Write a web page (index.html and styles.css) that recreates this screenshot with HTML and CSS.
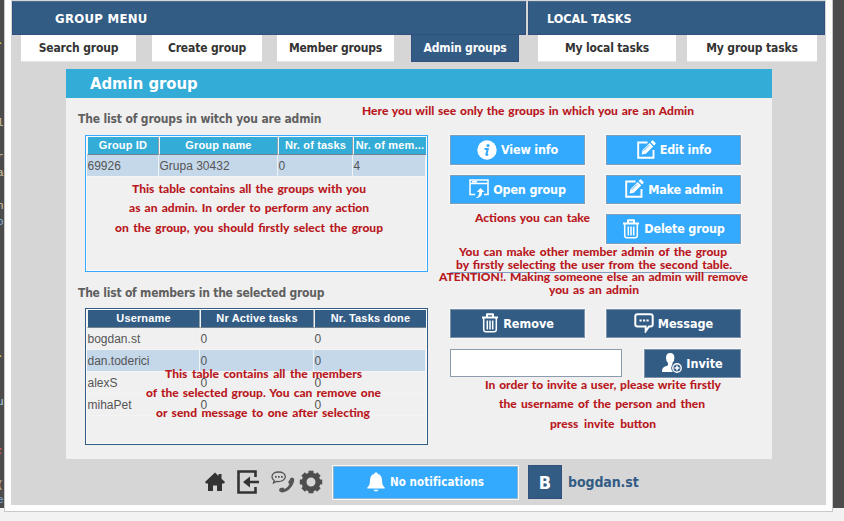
FILE: index.html
```html
<!DOCTYPE html>
<html lang="en">
<head>
<meta charset="utf-8">
<title>Admin group</title>
<link rel="stylesheet" href="styles.css">
</head>
<body>
<svg class="defs" aria-hidden="true">
  <symbol id="edit" viewBox="0 0 20 20"><path d="M11.500 2.500H2.200v15.300h15.300V10" fill="none" stroke="currentColor" stroke-width="1.900"/><path d="M5.500 14.500l1-4.300 7.200-7.200 3.500 3.500-7.300 7.200zM14.600 2l1.500-1.500q.7-.4 1.300.2l2 2q.6.700.1 1.300L18 5.500z" fill="currentColor"/><path d="M7.700 10.700l5.500-5.500" stroke="var(--bg)" stroke-width=".8"/></symbol>
  <symbol id="trash" viewBox="0 0 18 20"><path d="M1 4.500h16M6 4V1.300h6V4" fill="none" stroke="currentColor" stroke-width="2" stroke-linejoin="round"/><path d="M2.700 5v11.500q0 2.300 2.300 2.300h8q2.300 0 2.300-2.300V5M6.300 7.500v9M9 7.500v9M11.700 7.500v9" fill="none" stroke="currentColor" stroke-width="1.500"/></symbol>
</svg>
<div class="code" aria-hidden="true"><i class="c1">.</i><i class="c2">l</i><i class="c3">r</i><i class="c4">a</i><i class="c5">n</i><i class="c6">o</i><i class="c7">.</i><i class="c8">u</i><i class="c9">:</i><i class="c10">(</i><i class="c11">e</i></div>
<div class="window">
  <header class="menu"><div class="menu-group">GROUP MENU</div><div class="menu-local">LOCAL TASKS</div></header>
  <nav class="tabs">
    <a class="t1">Search group</a><a class="t2">Create group</a><a class="t3">Member groups</a><a class="t4 active">Admin groups</a><a class="t5">My local tasks</a><a class="t6">My group tasks</a>
  </nav>
  <main class="panel">
    <h1>Admin group</h1>
    <div class="content">
      <section class="lists">
        <h2>The list of groups in witch you are admin</h2>
        <div class="table groups">
          <div class="row head"><b>Group ID</b><b>Group name</b><b>Nr. of tasks</b><b>Nr. of mem...</b></div>
          <div class="row selected"><span>69926</span><span>Grupa 30432</span><span>0</span><span>4</span></div>
        </div>
        <h2 class="second">The list of members in the selected group</h2>
        <div class="table members">
          <div class="row head"><b>Username</b><b>Nr Active tasks</b><b>Nr. Tasks done</b></div>
          <div class="row"><span>bogdan.st</span><span>0</span><span>0</span></div>
          <div class="row selected"><span>dan.toderici</span><span>0</span><span>0</span></div>
          <div class="row"><span>alexS</span><span>0</span><span>0</span></div>
          <div class="row"><span>mihaPet</span><span>0</span><span>0</span></div>
        </div>
      </section>
      <section class="actions">
        <div class="button-grid">
          <button><svg width="20" height="20" viewBox="0 0 20 20"><circle cx="10" cy="10" r="9.700" fill="currentColor"/><circle cx="11" cy="5.500" r="1.600" fill="var(--bg)"/><path d="M7.500 9h3.300L9.300 14.500q-.2 1 1.900-.2" fill="none" stroke="var(--bg)" stroke-width="2"/></svg>View info</button>
          <button><svg width="20" height="20"><use href="#edit"/></svg>Edit info</button>
          <button><svg width="20" height="20" viewBox="0 0 20 20"><path d="M6 15.500H1V1h18v14.500h-4M1 4.500h18M3 2.700h5" fill="none" stroke="currentColor" stroke-width="1.500"/><path d="M6 19q4.500-1 4.200-6H7.800L11.500 9l4 4h-2.400q.3 6-7.100 6z" fill="currentColor"/></svg>Open group</button>
          <button><svg width="20" height="20"><use href="#edit"/></svg>Make admin</button>
          <button class="right"><svg width="18" height="20"><use href="#trash"/></svg>Delete group</button>
        </div>
        <hr>
        <div class="button-grid dark">
          <button><svg width="18" height="20"><use href="#trash"/></svg>Remove</button>
          <button><svg width="20" height="20" viewBox="0 0 20 20"><path d="M3.500 1.300h13q2.200 0 2.200 2.200v7.700q0 2.200-2.200 2.200H15l-3.300 4.800v-4.800H3.500q-2.200 0-2.200-2.200V3.500q0-2.200 2.200-2.200z" fill="none" stroke="currentColor" stroke-width="2"/><path d="M5.500 6.500h2.200v2H5.500zm3.500 0h2.200v2H9zm3.500 0h2.200v2h-2.200z" fill="currentColor"/></svg>Message</button>
        </div>
        <div class="invite dark">
          <input aria-label="Username">
          <button><svg width="20" height="20" viewBox="0 0 20 20"><path d="M4 5q0-5 4.200-5t4.200 5q0 3-2 5v2q1.500.3 2 .8v6.200H0q0-4.500 2.500-5.300Q6 12.700 6 12v-2Q4 8 4 5z" fill="currentColor"/><circle cx="15" cy="15" r="5.800" fill="var(--bg)"/><circle cx="15" cy="15" r="4.200" fill="none" stroke="currentColor" stroke-width="1.400"/><path d="M15 12.500v5M12.500 15h5" stroke="currentColor" stroke-width="1.500"/></svg>Invite</button>
        </div>
      </section>
    </div>
  </main>
  <footer>
    <svg class="home" width="20" height="20" viewBox="0 0 20 20"><path d="M10 .5L0 10l1 1.500h2V19h5v-5.500h4V19h5v-7.500h2l1-1.500-3.500-3.300V2h-3v2z" fill="#333"/></svg>
    <svg class="exit" width="22" height="24" viewBox="0 0 22 24"><path d="M18.500 7V1.500h-17v21h17V17" fill="none" stroke="#333" stroke-width="2.600"/><path d="M6 12l7-5.500v4.200h9v2.600h-9v4.200z" fill="#333"/></svg>
    <svg class="contact" width="24" height="22" viewBox="0 0 24 22"><path d="M7.500 1C3.500 1 1 3 1 5.800c0 1.500 1 2.900 2.200 3.700L2.500 12l3-1.600c5 .8 8.800-1.600 8.800-4.700C14.300 3 11.500 1 7.500 1z" fill="none" stroke="#555" stroke-width="1.300"/><path d="M4 5h1.700v1.700H4zm3 0h1.700v1.700H7zm3 0h1.700v1.700H10z" fill="#555"/><path d="M20 6.500l3 .7q1 2.800-1.200 6.600-3.300 6-9.300 7.500-3 .5-4.500-1.600l.7-2.400 3.300-.8 1.700 1.500q3.300-1.600 4.700-4.700l-1.300-2z" fill="#555"/></svg>
    <svg class="gear" width="24" height="24" viewBox="0 0 24 24"><circle cx="12" cy="12" r="7" fill="none" stroke="#4d4d4d" stroke-width="5"/><path d="M12 .8v4M12 19.200v4M.8 12h4M19.200 12h4M4.100 4.100l2.800 2.800M17.100 17.100l2.800 2.800M19.900 4.100l-2.800 2.800M6.900 17.100l-2.800 2.800" stroke="#4d4d4d" stroke-width="5"/></svg>
    <button class="notify"><svg width="18" height="20" viewBox="0 0 18 20"><path d="M9 .3q1.500 0 1.500 1.500Q15 3 15 8.500q0 5 2.700 7v1H.3v-1Q3 13.500 3 8.500 3 3 7.500 1.800 7.500.3 9 .3zM6.500 17.700h5Q11 19.500 9 19.500t-2.500-1.800z" fill="currentColor"/></svg>No notifications</button>
    <div class="avatar">B</div><div class="user">bogdan.st</div>
  </footer>
</div>
<div class="notes">
  <p class="n1">Here you will see only the groups in which you are an Admin</p>
  <p class="n2">This table contains all the groups with you</p>
  <p class="n3">as an admin. In order to perform any action</p>
  <p class="n4">on the group, you should firstly select the group</p>
  <p class="n5">Actions you can take</p>
  <p class="n6">You can make other member admin of the group</p>
  <p class="n7">by firstly selecting the user from the second table.</p>
  <p class="n8">ATENTION!. Making someone else an admin will remove</p>
  <p class="n9">you as an admin</p>
  <p class="n10">This table contains all the members</p>
  <p class="n11">of the selected group. You can remove one</p>
  <p class="n12">or send message to one after selecting</p>
  <p class="n13">In order to invite a user, please write firstly</p>
  <p class="n14">the username of the person and then</p>
  <p class="n15">press invite button</p>
</div>
</body>
</html>
```
FILE: styles.css
```css
* { box-sizing: border-box; }
body { margin: 0; width: 844px; height: 521px; overflow: hidden; position: relative; background: linear-gradient(#4c4c4c 508px, #f2f2f2 508px); font-family: "DejaVu Sans Condensed", "DejaVu Sans", sans-serif; font-stretch: condensed; }
.defs { position: absolute; width: 0; height: 0; }
.window { width: 829px; height: 512px; margin-left: 4px; background: #fdfdfd; border: 1px solid #c8c8c8; border-top: 0; display: flex; flex-direction: column; padding: 0 6px 6px; }
.menu { display: flex; gap: 2px; height: 35px; padding: 1px 1px 0 1px; background: #d6d6d6; color: #fff; font-weight: bold; font-size: 12.500px; flex: none; }
.menu div { background: #335c85; border: 1px solid #31507f; border-top-color: #4a6c90; height: 34px; line-height: 34px; }
.menu-group { width: 514px; padding-left: 42px; font-size: 13px; letter-spacing: .3px; }
.menu-local { flex: 1; padding-left: 18px; }
.tabs { display: flex; height: 34px; background: #d6d6d6; padding-left: 10px; flex: none; }
.tabs a { height: 27px; background: #fff; color: #333; font-weight: bold; font-size: 12px; letter-spacing: -.15px; line-height: 26px; text-align: center; white-space: nowrap; border-bottom: 1px solid #e6e6e6; }
.tabs .active { background: #335c85; color: #fff; border: 1px solid #31507f; border-top: 0; }
.t1 { width: 115px; } .t2 { width: 110px; margin-left: 16px; } .t3 { width: 117px; margin-left: 15px; } .t4 { width: 108px; margin-left: 17px; } .t5 { width: 138px; margin-left: 19px; } .t6 { width: 130px; margin-left: 11px; }
.tabs .t3 { letter-spacing: -.2px; }
.panel { background: #f0f0f0; border: solid #d6d6d6; border-width: 0 54px 0 55px; height: 390px; flex: none; }
h1 { margin: 0; height: 29px; line-height: 30px; background: #33acd8; color: #fff; font-size: 16.500px; padding-left: 24px; }
.content { display: flex; }
.lists { width: 384px; padding-left: 12px; }
h2 { margin: 0; height: 37px; padding-top: 13px; font-size: 12px; letter-spacing: -.16px; line-height: 16px; color: #606060; white-space: nowrap; }
.table { margin-left: 7px; width: 343px; height: 137px; border: 1px solid #335c85; padding: 1px; box-shadow: inset 0 0 0 1px #fafafa; font: 12px "Liberation Sans", sans-serif; color: #555; }
.groups { --cols: 72px 119px 75px 1fr; --th: #33acd8; border-color: #34aaff; }
.members { --cols: 113px 114px 1fr; --th: #335c85; }
.row { display: grid; grid-template-columns: var(--cols); height: 22px; line-height: 22px; border-bottom: 1px solid #f4f4f4; }
.row span { border-right: 1px solid #f0f3f6; padding-left: .5px; }
.members .row:not(.selected) span { border-color: #f2f2f2; }
.selected { background: #c5d8ea; }
.head { height: 18px; line-height: 17px; border: 0; color: #fff; background: var(--th); text-align: center; font-size: 11px; }
.head b { border: solid #f4f4f4; border-width: 0 0 0 1px; border-bottom: 1px solid #71818f; letter-spacing: .15px; white-space: nowrap; }
.head b:not(:last-child) { border-right: 1px solid #91a2ac; }
.groups .head b:last-child { letter-spacing: .2px; }
.second { height: 36px; letter-spacing: -.22px; }
.actions { width: 291px; padding-top: 37px; }
.button-grid { display: grid; grid-template-columns: 135px 135px; gap: 10px 21px; grid-auto-rows: 29.500px; }
button { --bg: #34aaff; background: var(--bg); color: #fff; border: 1px solid #7d9db8; box-shadow: 0 0 0 1px #f8f8f8; font: bold 12.500px "DejaVu Sans Condensed", "DejaVu Sans", sans-serif; letter-spacing: -.2px; padding: 0; display: flex; align-items: center; justify-content: center; gap: 4px; white-space: nowrap; }
.dark button { --bg: #335c85; border-color: #7a91a8; letter-spacing: 0; }
.right { grid-column: 2; }
hr { margin: 28px 0 36px; border: 0; border-top: 1px solid #829cc2; }
.dark { height: 29px; }
.invite { display: flex; justify-content: space-between; margin-top: 11px; }
.invite input { width: 172px; height: 28px; border: 1px solid #8c9cae; background: #fff; padding: 0; }
.invite button { width: 97px; }
footer { height: 46px; flex: none; background: #d6d6d6; display: flex; align-items: center; padding-left: 194px; }
.exit { margin-left: 12px; } .contact { margin-left: 12px; } .gear { margin-left: 4px; }
.notify { width: 185px; height: 33px; margin-left: 10px; border-color: #8db4d3; font-size: 11.500px; letter-spacing: .1px; gap: 5px; }
.avatar { width: 34px; height: 34px; margin-left: 10px; background: #335c85; color: #fff; font: bold 18px/33px "DejaVu Sans Condensed", "DejaVu Sans", sans-serif; text-align: center; border: 1px solid #31507f; }
.user { margin-left: 6px; color: #335c85; font-size: 14px; font-weight: bold; letter-spacing: -.1px; }
.notes p { position: absolute; margin: 0; height: 16px; line-height: 16px; font-family: Lato, sans-serif; font-size: 12px; font-weight: 900; color: #b9191e; white-space: nowrap; text-align-last: justify; }
.n1 { left: 362px; top: 103px; width: 332px; }
.n2 { left: 132px; top: 181px; width: 234px; }
.n3 { left: 129px; top: 200px; width: 240px; }
.n4 { left: 115px; top: 220px; width: 268px; }
.n5 { left: 475px; top: 210px; width: 115px; }
.n6 { left: 459px; top: 244px; width: 268px; }
.n7 { left: 456px; top: 257px; width: 276px; }
.n8 { left: 439px; top: 269px; width: 309px; }
.n9 { left: 549px; top: 282px; width: 90px; }
.n10 { left: 165px; top: 366px; width: 197px; }
.n11 { left: 146px; top: 385px; width: 235px; }
.n12 { left: 156px; top: 405px; width: 214px; }
.n13 { left: 485px; top: 377px; width: 236px; }
.n14 { left: 499px; top: 396px; width: 206px; }
.n15 { left: 550px; top: 416px; width: 106px; }
.code { position: absolute; left: 0; top: 0; width: 4px; height: 508px; overflow: hidden; font: 11px "Liberation Mono", monospace; color: #d8c7a5; }
.code i { position: absolute; left: -3px; font-style: normal; line-height: 12px; }
.c1 { top: 35px; color: #d8d85a; } .c2 { top: 117px; } .c3 { top: 151px; } .c4 { top: 167px; } .c5 { top: 200px; } .c6 { top: 216px; color: #8ab8e0; } .c7 { top: 348px; color: #d8d85a; } .c8 { top: 396px; color: #a9d3e8; } .c9 { top: 445px; color: #e05a5a; } .c10 { top: 479px; } .c11 { top: 494px; color: #78a9dc; }
```
